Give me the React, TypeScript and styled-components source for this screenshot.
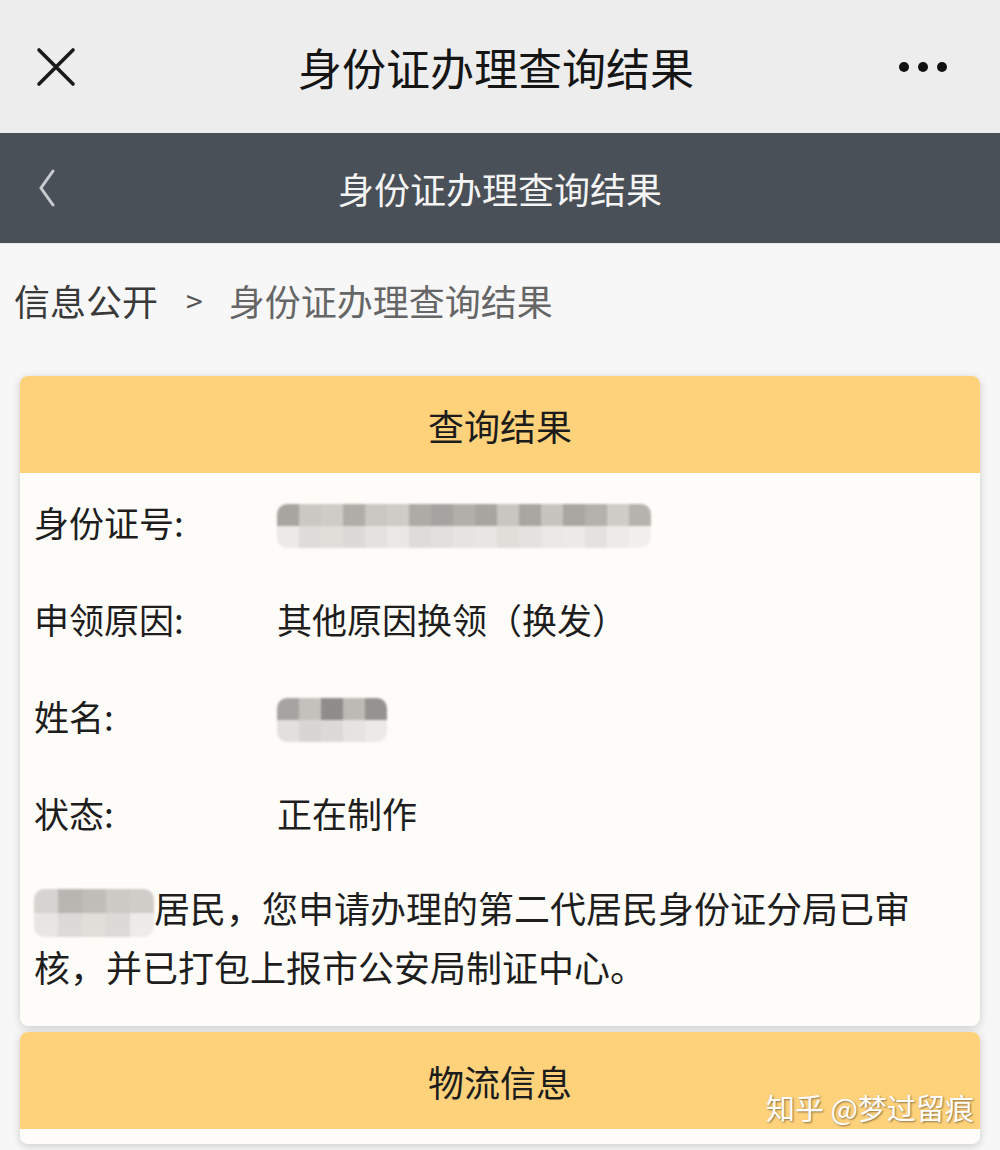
import React from 'react';
import styled, { createGlobalStyle } from 'styled-components';

const Global = createGlobalStyle`
  html, body {
    margin: 0;
    padding: 0;
    background: #f7f7f7;
  }
  body {
    font-family: "Noto Sans CJK SC", "Noto Sans", sans-serif;
  }
`;

const Page = styled.div`
  width: 1000px;
  height: 1150px;
  overflow: hidden;
  position: relative;
  background: #f7f7f7;
`;

const TopBar = styled.div`
  height: 133px;
  background: #ededed;
  display: grid;
  grid-template-columns: 120px 1fr 120px;
  align-items: center;
`;

const TopTitle = styled.div`
  text-align: center;
  font-size: 44px;
  color: #151515;
  padding-right: 8px;
`;

const IconCell = styled.div<{ $align: 'left' | 'right' }>`
  display: flex;
  justify-content: ${(p) => (p.$align === 'left' ? 'flex-start' : 'flex-end')};
  padding: ${(p) => (p.$align === 'left' ? '0 0 0 36px' : '0 52px 0 0')};
`;

const NavBar = styled.div`
  height: 110px;
  background: #4a5057;
  display: grid;
  grid-template-columns: 100px 1fr 100px;
  align-items: center;
`;

const NavTitle = styled.div`
  text-align: center;
  font-size: 36px;
  color: #f4f4f4;
`;

const Breadcrumb = styled.div`
  height: 112px;
  display: flex;
  align-items: center;
  padding-left: 14px;
  font-size: 36px;
  background: #f7f7f7;
  border-top: 1px solid #e8e8e8;
`;

const Crumb = styled.span<{ $muted?: boolean }>`
  color: ${(p) => (p.$muted ? '#666' : '#3a3a3a')};
`;

const Sep = styled.span`
  margin: 0 26px 0 28px;
  font-size: 30px;
  color: #555;
`;

const Content = styled.div`
  padding: 20px 20px 0;
  display: flex;
  flex-direction: column;
  gap: 6px;
`;

const Card = styled.div`
  background: #fefcf8;
  border-radius: 8px;
  box-shadow: 0 2px 8px rgba(0, 0, 0, 0.18);
  overflow: hidden;
`;

const CardHead = styled.div`
  height: 97px;
  background: #fdd27b;
  display: flex;
  align-items: center;
  justify-content: center;
  font-size: 36px;
  color: #1c1c1c;
`;

const CardBody = styled.div`
  padding: 0 14px 23px 14px;
`;

const Row = styled.div`
  height: 97px;
  display: grid;
  grid-template-columns: 243px 1fr;
  align-items: center;
  font-size: 35px;
  color: #1e1e1e;
`;

const Para = styled.div`
  font-size: 36px;
  line-height: 58px;
  color: #1e1e1e;
  padding-top: 17px;
  padding-bottom: 8px;
`;

const Mosaic = styled.span<{ $cols: number; $size: number }>`
  display: inline-grid;
  grid-template-columns: repeat(${(p) => p.$cols}, ${(p) => p.$size}px);
  grid-auto-rows: ${(p) => p.$size}px;
  vertical-align: middle;
  filter: blur(1.2px);
  border-radius: 10px;
  overflow: hidden;
`;

const Tile = styled.span<{ $shade: string }>`
  background: ${(p) => p.$shade};
`;

const Footer = styled.div`
  height: 15px;
`;

const Watermark = styled.div`
  position: absolute;
  right: 26px;
  bottom: 22px;
  font-size: 29px;
  color: #fdfdfd;
  text-shadow: 1px 1px 2px rgba(0, 0, 0, 0.45);
`;

const idTop = ['#a8a5a1', '#cbc8c4', '#cfccc8', '#b0ada9', '#cac7c3', '#cfccc8', '#aeaba7', '#a6a3a0', '#b2afab', '#a8a5a1', '#c9c6c2', '#a9a6a2', '#c7c4c0', '#a9a6a2', '#b4b1ad', '#cfccc8', '#b6b3af'];
const idBot = ['#eceae6', '#dedcd8', '#e0ded9', '#dcdad6', '#e4e2de', '#eae8e4', '#dedcd8', '#e2e0dc', '#e6e4e0', '#e8e6e2', '#e0ded9', '#e4e2de', '#eae8e4', '#eceae6', '#e4e2de', '#eeece8', '#f2f0ec'];
const nameTop = ['#a6a3a0', '#c4c1bd', '#8f8c89', '#bdbab6', '#95928f'];
const nameBot = ['#e2e0dc', '#d8d6d2', '#dcdad6', '#e6e4e0', '#eceae6'];
const paraTop = ['#d6d4d0', '#b9b6b2', '#c0bdb9', '#cdcac6', '#d0cdc9'];
const paraBot = ['#e8e6e2', '#dcdad6', '#e0ded9', '#dcdad6', '#eeece8'];

const Pixels: React.FC<{ top: string[]; bottom: string[]; size: number }> = ({ top, bottom, size }) => (
  <Mosaic $cols={top.length} $size={size}>
    {top.concat(bottom).map((c, i) => (
      <Tile key={i} $shade={c} />
    ))}
  </Mosaic>
);

const App: React.FC = () => {
  return (
    <Page>
      <Global />
      <TopBar>
        <IconCell $align="left">
          <svg width="40" height="40" viewBox="0 0 40 40">
            <path d="M3 3 L37 37 M37 3 L3 37" stroke="#1a1a1a" strokeWidth="3.6" strokeLinecap="round" />
          </svg>
        </IconCell>
        <TopTitle>身份证办理查询结果</TopTitle>
        <IconCell $align="right">
          <svg width="50" height="12" viewBox="0 0 50 12">
            <circle cx="6" cy="6" r="5" fill="#111" />
            <circle cx="25" cy="6" r="5" fill="#111" />
            <circle cx="44" cy="6" r="5" fill="#111" />
          </svg>
        </IconCell>
      </TopBar>
      <NavBar>
        <IconCell $align="left">
          <svg width="22" height="40" viewBox="0 0 22 40">
            <path d="M17 3 L5 20 L17 37" stroke="#c9cccf" strokeWidth="3" fill="none" strokeLinecap="round" />
          </svg>
        </IconCell>
        <NavTitle>身份证办理查询结果</NavTitle>
        <div />
      </NavBar>
      <Breadcrumb>
        <Crumb>信息公开</Crumb>
        <Sep>&gt;</Sep>
        <Crumb $muted>身份证办理查询结果</Crumb>
      </Breadcrumb>
      <Content>
        <Card>
          <CardHead>查询结果</CardHead>
          <CardBody>
            <Row>
              <span>身份证号:</span>
              <span>
                <Pixels top={idTop} bottom={idBot} size={22} />
              </span>
            </Row>
            <Row>
              <span>申领原因:</span>
              <span>其他原因换领（换发）</span>
            </Row>
            <Row>
              <span>姓名:</span>
              <span>
                <Pixels top={nameTop} bottom={nameBot} size={22} />
              </span>
            </Row>
            <Row>
              <span>状态:</span>
              <span>正在制作</span>
            </Row>
            <Para>
              <Pixels top={paraTop} bottom={paraBot} size={24} />
              居民，您申请办理的第二代居民身份证分局已审核，并已打包上报市公安局制证中心。
            </Para>
          </CardBody>
        </Card>
        <Card>
          <CardHead>物流信息</CardHead>
          <Footer />
        </Card>
      </Content>
      <Watermark>知乎 @梦过留痕</Watermark>
    </Page>
  );
};

export default App;
